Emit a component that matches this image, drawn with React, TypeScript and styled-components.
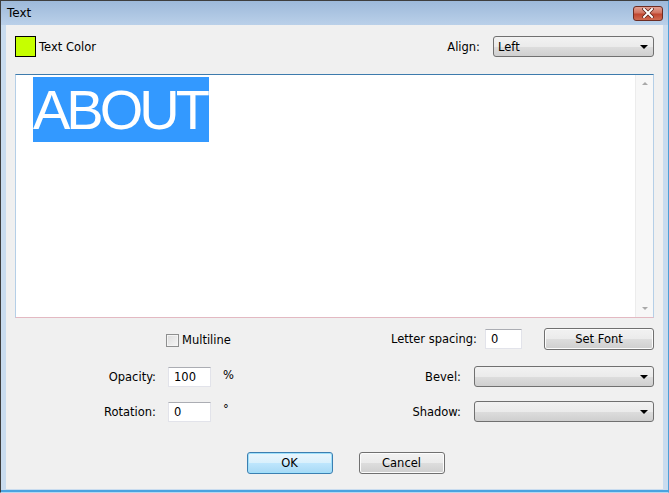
import React from 'react'
import styled, { createGlobalStyle } from 'styled-components'

const GlobalStyle = createGlobalStyle`
  html, body {
    margin: 0;
    padding: 0;
    background: #f0f0f0;
  }
  body {
    font-family: "DejaVu Sans", Verdana, sans-serif;
    font-size: 11.5px;
    color: #000;
  }
`

const Window = styled.div`
  width: 669px;
  height: 493px;
  box-sizing: border-box;
  display: flex;
  flex-direction: column;
  padding: 0 5px 3px 5px;
  background: linear-gradient(to top, #4aa3df 0, #4aa3df 2px, #c9dcef 2px);
  border-top: 1px solid #3e3e3e;
  border-left: 1px solid #3e3e3e;
  border-right: 1px solid #4f9fd6;
  border-bottom: 1px solid #b4d8f0;
`

const TitleBar = styled.div`
  height: 24px;
  margin: 0 -5px;
  padding: 0 5px 0 6px;
  display: flex;
  align-items: center;
  justify-content: space-between;
  background: linear-gradient(#9db9da, #bad0e9);
`

const Title = styled.span`
  font-family: "DejaVu Sans", sans-serif;
  font-size: 12px;
  color: #000;
`

const CloseButton = styled.div`
  width: 30px;
  height: 15px;
  border: 1px solid #6c2c22;
  border-radius: 3px;
  box-sizing: border-box;
  background: linear-gradient(#e2a092 0%, #d27461 45%, #c0452f 55%, #cf6b52 100%);
  display: flex;
  align-items: center;
  justify-content: center;
`

const Body = styled.div`
  flex: 1;
  background: #f0f0f0;
  display: flex;
  flex-direction: column;
  padding: 11px 9px 0 9px;
`

const TopRow = styled.div`
  height: 21px;
  display: flex;
  align-items: center;
  justify-content: space-between;
`

const ColorPick = styled.div`
  display: flex;
  align-items: center;
  gap: 3px;
`

const Swatch = styled.div<{ $color: string }>`
  width: 21px;
  height: 21px;
  box-sizing: border-box;
  border: 1px solid #000;
  background: ${(p) => p.$color};
`

const Field = styled.div`
  display: flex;
  align-items: center;
  gap: 13px;
`

const Select = styled.div<{ $width: number }>`
  width: ${(p) => p.$width}px;
  height: 21px;
  box-sizing: border-box;
  border: 1px solid #707070;
  border-radius: 3px;
  background: linear-gradient(#f2f2f2 0%, #ebebeb 50%, #dddddd 51%, #cfcfcf 100%);
  display: flex;
  align-items: center;
  justify-content: space-between;
  padding: 0 5px 0 4px;
`

const Caret = styled.span`
  width: 0;
  height: 0;
  border-left: 4px solid transparent;
  border-right: 4px solid transparent;
  border-top: 4px solid #000;
`

const Editor = styled.div`
  margin-top: 17px;
  height: 244px;
  box-sizing: border-box;
  background: #fff;
  border: 1px solid #b5cfe7;
  border-top-color: #3d7bad;
  border-bottom-color: #e3b9c2;
  display: flex;
`

const TextPane = styled.div`
  flex: 1;
  padding: 2px 0 0 17px;
`

const Selected = styled.span`
  display: inline-block;
  height: 65px;
  line-height: 66px;
  background: #3399ff;
  color: #fff;
  font-family: "Liberation Sans", Arial, sans-serif;
  font-size: 56px;
  letter-spacing: -4px;
  padding-right: 3px;
`

const ScrollBar = styled.div`
  width: 17px;
  background: #f7f7f7;
  border-left: 1px solid #ececec;
  display: flex;
  flex-direction: column;
  justify-content: space-between;
  align-items: center;
  padding: 7px 0 7px 0;
`

const ArrowUp = styled.span`
  width: 0;
  height: 0;
  border-left: 3px solid transparent;
  border-right: 3px solid transparent;
  border-bottom: 3px solid #a9a9a9;
`

const ArrowDown = styled(ArrowUp)`
  border-bottom: 0;
  border-top: 3px solid #a9a9a9;
`

const Options = styled.div`
  margin-top: 10px;
  display: grid;
  grid-template-columns: 319px 1fr;
  grid-template-rows: 22px 21px 21px;
  row-gap: 16px;
  & > :nth-child(n + 5) {
    margin-top: -4px;
  }
`

const LeftCell = styled.div`
  display: grid;
  grid-template-columns: 141px 43px auto;
  column-gap: 12px;
  align-items: center;
`

const RightCell = styled.div`
  display: flex;
  align-items: center;
  justify-content: flex-end;
  gap: 13px;
`

const Label = styled.span`
  text-align: right;
  white-space: nowrap;
`

const Unit = styled.span<{ $raise?: boolean }>`
  margin-top: ${(p) => (p.$raise ? '-6px' : '-3px')};
`

const Input = styled.div<{ $width: number }>`
  width: ${(p) => p.$width}px;
  height: 20px;
  box-sizing: border-box;
  background: #fff;
  border: 1px solid #e2e3ea;
  border-top-color: #abadb3;
  padding: 0 5px;
  display: flex;
  align-items: center;
`

const CheckLabel = styled.label`
  grid-column: 2 / 4;
  margin-left: -2px;
  margin-top: 2px;
  display: flex;
  align-items: center;
  gap: 3px;
`

const CheckBox = styled.span`
  width: 13px;
  height: 13px;
  box-sizing: border-box;
  border: 1px solid #8e8f8f;
  background: linear-gradient(135deg, #dcdcdc, #f6f6f6);
  box-shadow: inset 0 0 0 1px #f4f4f4;
`

const Button = styled.div<{ $width: number; $default?: boolean }>`
  width: ${(p) => p.$width}px;
  height: 22px;
  box-sizing: border-box;
  border-radius: 3px;
  display: flex;
  align-items: center;
  justify-content: center;
  border: 1px solid ${(p) => (p.$default ? '#3c7fb1' : '#707070')};
  background: ${(p) =>
    p.$default
      ? 'linear-gradient(#eaf6fd 0%, #d9f0fc 50%, #bee6fd 51%, #a7d9f5 100%)'
      : 'linear-gradient(#f2f2f2 0%, #ebebeb 50%, #dddddd 51%, #cfcfcf 100%)'};
  box-shadow: ${(p) => (p.$default ? 'inset 0 0 0 1px #9fe0fb' : 'inset 0 0 0 1px #fcfcfc')};
`

const LetterRow = styled.div`
  display: flex;
  align-items: center;
  justify-content: flex-end;
`

const LetterInput = styled(Input)`
  margin: 0 22px 0 8px;
`

const Footer = styled.div`
  margin-top: 28px;
  display: flex;
  justify-content: center;
  gap: 26px;
  padding-left: 22px;
`

export default function App() {
  return (
    <>
      <GlobalStyle />
      <Window>
        <TitleBar>
          <Title>Text</Title>
          <CloseButton>
            <svg width="12" height="10" viewBox="0 0 12 10">
              <path d="M2 1 L10 9 M10 1 L2 9" stroke="#5a2018" strokeWidth="3.4" strokeLinecap="square" />
              <path d="M2 1 L10 9 M10 1 L2 9" stroke="#fff" strokeWidth="2" strokeLinecap="square" />
            </svg>
          </CloseButton>
        </TitleBar>
        <Body>
          <TopRow>
            <ColorPick>
              <Swatch $color="#c6ff00" />
              <span>Text Color</span>
            </ColorPick>
            <Field>
              <span>Align:</span>
              <Select $width={161}>
                <span>Left</span>
                <Caret />
              </Select>
            </Field>
          </TopRow>
          <Editor>
            <TextPane>
              <Selected>ABOUT</Selected>
            </TextPane>
            <ScrollBar>
              <ArrowUp />
              <ArrowDown />
            </ScrollBar>
          </Editor>
          <Options>
            <LeftCell>
              <span />
              <CheckLabel>
                <CheckBox />
                <span>Multiline</span>
              </CheckLabel>
            </LeftCell>
            <LetterRow>
              <Label>Letter spacing:</Label>
              <LetterInput $width={37}>0</LetterInput>
              <Button $width={110}>Set Font</Button>
            </LetterRow>
            <LeftCell>
              <Label>Opacity:</Label>
              <Input $width={43}>100</Input>
              <Unit>%</Unit>
            </LeftCell>
            <RightCell>
              <Label>Bevel:</Label>
              <Select $width={180}>
                <span />
                <Caret />
              </Select>
            </RightCell>
            <LeftCell>
              <Label>Rotation:</Label>
              <Input $width={43}>0</Input>
              <Unit $raise>°</Unit>
            </LeftCell>
            <RightCell>
              <Label>Shadow:</Label>
              <Select $width={180}>
                <span />
                <Caret />
              </Select>
            </RightCell>
          </Options>
          <Footer>
            <Button $width={86} $default>OK</Button>
            <Button $width={86}>Cancel</Button>
          </Footer>
        </Body>
      </Window>
    </>
  )
}
